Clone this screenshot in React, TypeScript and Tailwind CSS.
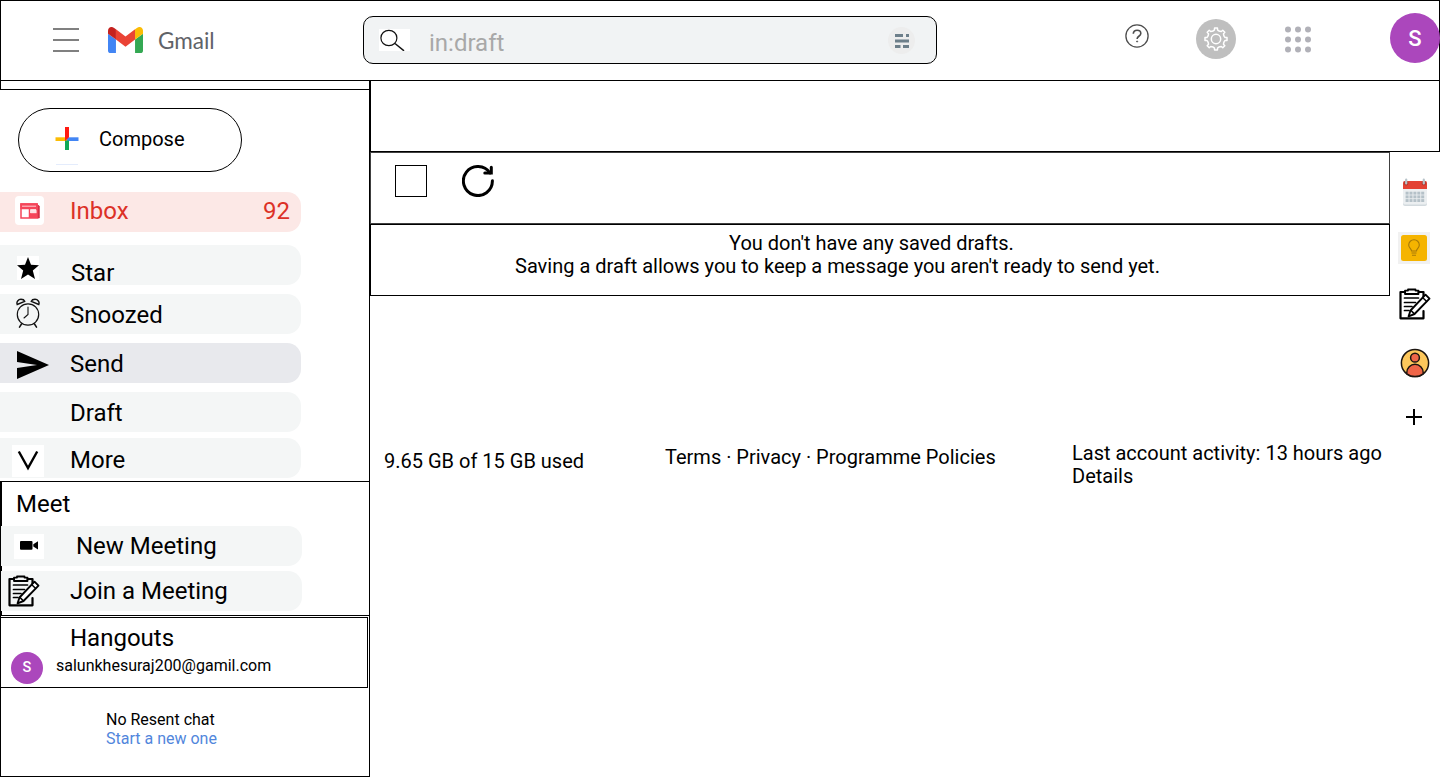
import React from "react";

type IconProps = { className?: string };

const gearPoints = Array.from({ length: 8 }, (_, i) =>
  [
    [-0.31, 8.6],
    [-0.17, 9.2],
    [-0.13, 11.1],
    [0.13, 11.1],
    [0.17, 9.2],
    [0.31, 8.6],
  ]
    .map(([offset, radius]) => {
      const angle = (i * Math.PI) / 4 + offset;
      return `${(12 + radius * Math.sin(angle)).toFixed(2)},${(12 - radius * Math.cos(angle)).toFixed(2)}`;
    })
    .join(" "),
).join(" ");

function GmailMark() {
  return (
    <svg viewBox="52 42 88 66" className="h-[26px] w-[35px]" preserveAspectRatio="none">
      <path fill="#4285f4" d="M58 108h14V74L52 59v43c0 3.32 2.69 6 6 6" />
      <path fill="#34a853" d="M120 108h14c3.32 0 6-2.69 6-6V59l-20 15" />
      <path fill="#fbbc04" d="M120 48v26l20-15v-8c0-7.42-8.47-11.65-14.4-7.2" />
      <path fill="#ea4335" d="M72 74V48l24 18 24-18v26L96 92" />
      <path fill="#c5221f" d="M52 51v8l20 15V48l-5.6-4.2c-5.94-4.45-14.4-.22-14.4 7.2" />
    </svg>
  );
}

function ClipboardIcon({ className }: IconProps) {
  return (
    <svg viewBox="0 0 32 32" className={className} fill="none" stroke="#000" strokeWidth="2.2" strokeLinejoin="round" strokeLinecap="round">
      <path d="M6 4H1.500v26.300h23V23M19.500 4h5v5" />
      <path d="M6 2.600h3V1.500h7.500v1.100h3V6H6z" strokeWidth="1.800" />
      <path d="M5.500 10h14M5.500 14.500h11M5.500 18.500h7.500M5.500 22.500h4.500" strokeWidth="1.700" />
      <path d="M26.500 6.700l4 4L15.500 26l-5.900 2.300 1.900-5.800z" fill="#fff" strokeWidth="1.900" />
      <path d="M23.800 9.700l3.900 3.800M12 22.500l3.400 3.400" strokeWidth="1.500" />
    </svg>
  );
}

function SearchBar() {
  return (
    <div className="mt-[15px] flex h-12 w-[574px] shrink-0 rounded-[10px] border border-black bg-[#f1f3f4]">
      <div className="ml-[15px] mt-3 h-[22px] w-[31px] bg-white">
        <svg viewBox="0 0 31 22" className="h-[22px] w-[31px]" fill="none" stroke="#111" strokeWidth="1.200">
          <ellipse cx="9.900" cy="9" rx="8" ry="7.700" />
          <path d="M16 14.500L25 21.800" strokeWidth="1.500" />
        </svg>
      </div>
      <span className="ml-[19px] mt-3 text-2xl leading-7 text-[#a8a8a8]">in:draft</span>
      <div className="ml-auto mr-[21px] mt-[10px] flex h-[27px] w-[27px] items-center justify-center rounded-full bg-[#ededed]">
        <svg viewBox="0 0 14 14" className="h-[14px] w-[14px]" fill="#6d7f8a">
          <path d="M0 0h8v3H0zM11 0h3v3h-3zM0 5.500h14v3H0zM0 11h5.500v3H0zM8 11h6v3H8z" />
        </svg>
      </div>
    </div>
  );
}

function Header() {
  return (
    <header className="flex h-[81px] w-full shrink-0 border border-black">
      <div className="ml-[52px] mt-[27px] flex h-6 w-[26px] shrink-0 flex-col justify-between">
        <span className="h-[2px] bg-[#808080]" />
        <span className="h-[2px] bg-[#808080]" />
        <span className="h-[2px] bg-[#808080]" />
      </div>
      <div className="ml-[29px] mt-[26px] shrink-0">
        <GmailMark />
      </div>
      <span className="ml-[15px] mr-[147px] mt-[26px] w-[58px] shrink-0 font-['Lato'] text-[22.5px] leading-7 text-[#5f6368]">Gmail</span>
      <SearchBar />
      <svg viewBox="0 0 24 24" className="ml-[188px] mt-[23px] h-6 w-6 shrink-0" fill="none" stroke="#4d4d4d">
        <circle cx="12" cy="12" r="11.100" strokeWidth="1.300" />
        <path d="M8.300 9.800c0-2.300 1.600-3.600 3.800-3.600 2.100 0 3.700 1.200 3.700 3.200 0 2.900-3.600 2.800-3.600 5.200v.5" strokeWidth="1.600" />
        <circle cx="12.100" cy="17.500" r=".6" fill="#4d4d4d" strokeWidth=".8" />
      </svg>
      <div className="ml-[47px] mt-[18px] flex h-10 w-10 shrink-0 items-center justify-center rounded-full bg-[#bfbfbf]">
        <svg viewBox="0 0 24 24" className="h-6 w-6" fill="none" stroke="#fff" strokeWidth="1.500" strokeLinejoin="round">
          <polygon points={gearPoints} />
          <circle cx="12" cy="12" r="4.700" />
        </svg>
      </div>
      <svg viewBox="0 0 26 27" className="ml-[49px] mt-[25px] h-[27px] w-[26px] shrink-0" fill="#b1b1b8">
        {[3.5, 13.5, 23.5].map((y) => [3, 13, 23].map((x) => <circle key={`${x}-${y}`} cx={x} cy={y} r="3" />))}
      </svg>
      <div className="-mr-px ml-auto mt-3 flex h-[50px] w-[50px] shrink-0 items-center justify-center rounded-full bg-[#ab47bc] pt-px text-[22px] font-medium text-white">
        S
      </div>
    </header>
  );
}

type NavRowProps = { label: string; icon?: React.ReactNode; row: string; text: string; count?: string };

function NavRow({ label, icon, row, text, count }: NavRowProps) {
  return (
    <div className={`flex h-10 w-[301px] shrink-0 rounded-r-[14px] text-2xl leading-7 ${row}`}>
      <div className="flex w-[70px] shrink-0">{icon}</div>
      <span className={`whitespace-nowrap ${text}`}>{label}</span>
      {count && <span className="ml-auto mr-[11px] mt-[5px]">{count}</span>}
    </div>
  );
}

function InboxIcon() {
  return (
    <div className="ml-[15px] mt-1 flex h-[29px] w-[29px] items-center justify-center rounded-sm bg-white">
      <svg viewBox="0 0 20 16" className="h-4 w-5" fill="none" stroke="#f5455a" strokeWidth="1.500">
        <path d="M17 1.500L19.300 3v12H17z" fill="#d42f45" stroke="#d42f45" strokeWidth=".8" />
        <path d="M1 1h16v14H1z" />
        <path d="M1 1h16v4.500H1z" fill="#f5455a" />
        <path d="M2 3.200h14" stroke="#fcc4ca" strokeWidth="1.100" />
        <path d="M9.500 5v10" />
        <path d="M10 10h7v5h-7z" fill="#f5455a" stroke="none" />
        <path d="M10.500 7.200h6v3h-6z" fill="#fde0e3" stroke="none" />
      </svg>
    </div>
  );
}

function StarIcon() {
  return (
    <svg viewBox="0 0 22 24" className="ml-[17px] mt-[11px] h-6 w-[22px] bg-white">
      <path d="M11 1l3 7.800 8 .4-6.200 5.200L18 23l-7-4.600L4 23l2.200-8.600L0 9.200l8-.4z" />
    </svg>
  );
}

function AlarmIcon() {
  return (
    <svg viewBox="0 0 24 30" className="ml-4 mt-1 h-[30px] w-6" fill="none" stroke="#111" strokeWidth="1.200" strokeLinecap="round">
      <circle cx="12" cy="16.500" r="10.700" />
      <path d="M12 9v7.500L8 20" strokeWidth="1.100" />
      <path d="M1.200 6.500C.2 4 2.200 1.300 5 1.300c1.800 0 3.200.7 3.700 2zM22.800 6.500c1-2.500-1-5.200-3.800-5.200-1.800 0-3.200.7-3.700 2z" strokeWidth="1.400" />
      <path d="M5.500 26l-2 3.200M18.500 26l2 3.200" strokeWidth="1.500" />
    </svg>
  );
}

function Sidebar() {
  return (
    <aside className="flex h-[696px] w-[370px] shrink-0 flex-col border-b border-r border-black">
      <div className="h-[9px] shrink-0 border-b border-l border-black" />
      <button className="ml-[18px] mt-[18px] flex h-16 w-56 shrink-0 rounded-full border border-black">
        <svg viewBox="0 0 24 38" className="ml-9 mt-[18px] h-[38px] w-6">
          <path fill="#fbbc05" d="M.5 10.300H12V14H.5z" />
          <path fill="#4285f4" d="M12 10.300h11.500V14H12z" />
          <path fill="#0fa958" d="M10 13.500h4V23h-4z" />
          <path fill="#ff1a12" d="M10 0h4v10.300L10 14z" />
          <path fill="#e4ecfc" d="M1 37h22v1H1z" />
        </svg>
        <span className="ml-5 mt-[18px] text-xl leading-6">Compose</span>
      </button>

      <NavRow label="Inbox" count="92" icon={<InboxIcon />} row="mt-5 bg-[#fce8e6] text-[#dc3127]" text="mt-[5px]" />
      <NavRow label="Star" icon={<StarIcon />} row="mt-[13px] bg-[#f4f6f6]" text="ml-px mt-[14px]" />
      <NavRow label="Snoozed" icon={<AlarmIcon />} row="mt-[9px] bg-[#f4f6f6]" text="mt-[7px]" />
      <NavRow
        label="Send"
        row="mt-[9px] bg-[#e8e9ed]"
        text="mt-[7px]"
        icon={
          <svg viewBox="0 0 32 28" className="ml-[17px] mt-2 h-7 w-8">
            <path d="M0 0l32 14L0 28V17l20-3L0 11z" />
          </svg>
        }
      />
      <NavRow label="Draft" row="mt-[9px] bg-[#f4f6f6]" text="mt-[7px]" />
      <NavRow
        label="More"
        row="mt-[6px] bg-[#f4f6f6]"
        text="mt-2"
        icon={
          <svg viewBox="0 0 32 32" className="ml-3 mt-[7px] h-8 w-8 bg-white" fill="none" stroke="#000" strokeWidth="2.400">
            <path d="M6.800 6.500L16 23l9.200-16.500" />
          </svg>
        }
      />

      <section className="mt-[3px] flex h-[135px] shrink-0 flex-col border-y border-l border-black">
        <div className="h-11 border-l border-black pl-[14px] pt-2 text-2xl leading-7">Meet</div>
        <NavRow
          label="New Meeting"
          row="bg-[#f4f6f6]"
          text="ml-[5px] mt-[6px]"
          icon={
            <svg viewBox="0 0 30 25" className="ml-[13px] mt-2 h-[25px] w-[30px] bg-white">
              <rect x="6" y="7" width="12.500" height="8.800" rx="1" />
              <path d="M19.300 10.300L24 7.300v8.200l-4.700-3z" />
            </svg>
          }
        />
        <div className="h-[5px] border-l border-black" />
        <NavRow label="Join a Meeting" row="bg-[#f4f6f6]" text="-ml-px mt-[6px]" icon={<ClipboardIcon className="ml-[7px] mt-1 h-8 w-8" />} />
        <div className="h-1 border-l border-black" />
      </section>

      <div className="flex grow flex-col border-l border-black pt-px">
        <section className="h-[71px] w-[367px] border-y border-r border-black">
          <h2 className="ml-[69px] mt-[6px] text-2xl leading-7">Hangouts</h2>
          <div className="flex">
            <div className="ml-[10px] flex h-8 w-8 items-center justify-center rounded-full bg-[#ab47bc] text-[14.5px] font-medium text-white">S</div>
            <span className="ml-[13px] mt-1 text-base leading-[19px]">salunkhesuraj200@gamil.com</span>
          </div>
        </section>
        <div className="ml-[105px] mt-[22px] text-base leading-[19px]">
          <p>No Resent chat</p>
          <p className="text-[#5186dc]">Start a new one</p>
        </div>
      </div>
    </aside>
  );
}

function AppRail() {
  return (
    <div className="flex w-[50px] shrink-0 flex-col items-center">
      <svg viewBox="0 0 24 28" className="mt-[26px] h-7 w-6 shrink-0">
        <rect y="3" width="24" height="25" rx="2" fill="#d3dade" />
        <rect y="3" width="24" height="23.500" rx="2" fill="#eceff1" />
        <path fill="#e34234" d="M2 3h20a2 2 0 0 1 2 2v6H0V5a2 2 0 0 1 2-2z" />
        <path d="M3.200 5.200h.01M20.800 5.200h.01" stroke="#b13a31" strokeWidth="4.500" strokeLinecap="round" />
        <path d="M3.200 1.500v4M20.800 1.500v4" stroke="#b7c3c9" strokeWidth="2.200" strokeLinecap="round" />
        {[13.7, 17.4, 21.1].map((y) =>
          [2.6, 6.5, 10.4, 14.3, 18.2].map((x) => <rect key={`${x}-${y}`} x={x} y={y} width="3" height="2.900" fill="#b5c1c8" />),
        )}
      </svg>
      <div className="-ml-[2px] mt-[26px] flex h-8 w-8 shrink-0 items-center justify-center bg-[#f1f1f1]">
        <svg viewBox="0 0 26 26" className="h-[26px] w-[26px]" fill="none" stroke="#a77908" strokeWidth="1.100">
          <rect width="26" height="26" rx="2.500" fill="#f5b400" stroke="none" />
          <path d="M10.500 16c0-2.500-2.800-3-2.800-6a5.300 5.300 0 0 1 10.600 0c0 3-2.800 3.500-2.800 6zM10.500 18h5M11 20.200h4" />
        </svg>
      </div>
      <ClipboardIcon className="mt-6 h-8 w-8 shrink-0" />
      <svg viewBox="0 0 30 30" className="mt-7 h-[30px] w-[30px] shrink-0" stroke="#1c1510" strokeWidth="1.500">
        <circle cx="15" cy="15" r="13.600" fill="#fdc75b" />
        <path fill="#ef6548" d="M6.800 25.800v-1.300a8.200 8.200 0 0 1 16.400 0v1.300A13.600 13.600 0 0 1 6.800 25.800z" />
        <circle cx="15" cy="9.700" r="4.400" fill="#ef6548" />
      </svg>
      <svg viewBox="0 0 16 16" className="-ml-[2px] mt-[31px] h-4 w-4 shrink-0" stroke="#000" strokeWidth="2">
        <path d="M0 8h16M8 0v16" />
      </svg>
    </div>
  );
}

function Mailbox() {
  return (
    <div className="w-[1020px] shrink-0">
      <div className="flex h-[72px] border border-[#404040]">
        <div className="ml-6 mt-3 h-8 w-8 border border-black" />
        <svg viewBox="0 0 32 32" className="ml-[35px] mt-3 h-8 w-8" fill="none" stroke="#000" strokeWidth="3" strokeLinecap="round">
          <path d="M30.400 15.800A14.500 14.500 0 1 1 28 8" />
          <path d="M29.300 2.300V8h-6.500" />
        </svg>
      </div>
      <div className="h-[72px] whitespace-nowrap border border-black pt-[7px] text-xl leading-[23px]">
        <p className="ml-[358px]">You don't have any saved drafts.</p>
        <p className="ml-36">Saving a draft allows you to keep a message you aren't ready to send yet.</p>
      </div>
      <footer className="mt-[146px] flex whitespace-nowrap text-xl leading-[23px]">
        <span className="ml-[14px] mt-2 w-[281px]">9.65 GB of 15 GB used</span>
        <span className="mt-1 w-[407px]">Terms · Privacy · Programme Policies</span>
        <div>
          <p>Last account activity: 13 hours ago</p>
          <p>Details</p>
        </div>
      </footer>
    </div>
  );
}

export default function App() {
  return (
    <div className="flex h-[777px] w-[1440px] flex-col overflow-hidden bg-white font-['Roboto',sans-serif] text-black">
      <Header />
      <div className="flex">
        <Sidebar />
        <main className="w-[1070px]">
          <div className="h-[71px] border-x border-b border-black" />
          <div className="flex">
            <Mailbox />
            <AppRail />
          </div>
        </main>
      </div>
    </div>
  );
}
